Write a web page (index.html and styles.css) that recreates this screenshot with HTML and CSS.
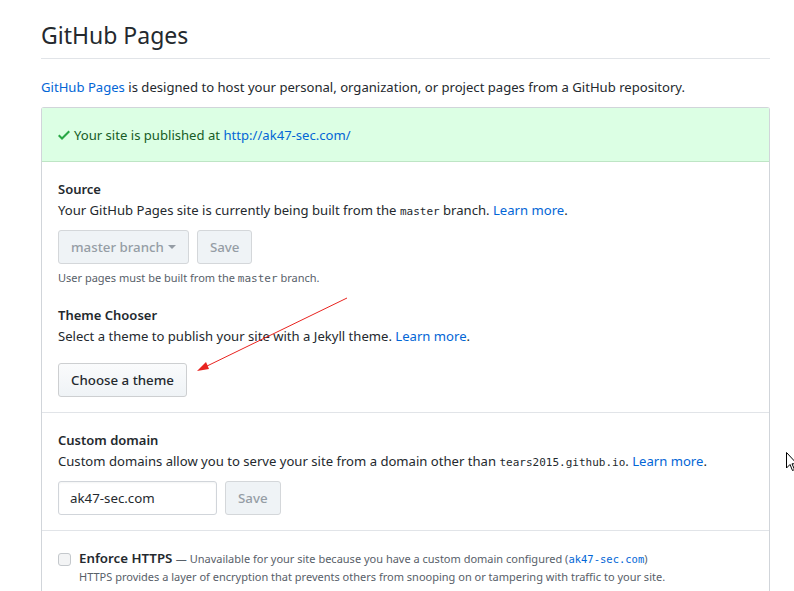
FILE: index.html
```html
<!DOCTYPE html>
<html>
<head>
<meta charset="utf-8">
<link rel="stylesheet" href="styles.css">
</head>
<body>
<div class="page">
  <h2 class="title">GitHub Pages</h2>
  <p class="intro"><a href="#">GitHub Pages</a> is designed to host your personal, organization, or project pages from a GitHub repository.</p>
  <div class="box">
    <div class="flash">
      <svg class="check" width="12" height="16" viewBox="0 0 12 16"><path d="M12 5l-8 8-4-4 1.5-1.5L4 10l6.5-6.5L12 5z" fill="#28a745"/></svg>
      <span>Your site is published at <a href="#">http://ak47-sec.com/</a></span>
    </div>
    <div class="section">
      <h4 class="label">Source</h4>
      <p class="desc">Your GitHub Pages site is currently being built from the <code>master</code> branch. <a href="#">Learn more</a>.</p>
      <div class="row">
        <button class="btn disabled">master branch <span class="caret"></span></button>
        <button class="btn disabled">Save</button>
      </div>
      <p class="note">User pages must be built from the <code>master</code> branch.</p>
      <h4 class="label second">Theme Chooser</h4>
      <p class="desc">Select a theme to publish your site with a Jekyll theme. <a href="#">Learn more</a>.</p>
      <div class="row spaced">
        <button class="btn">Choose a theme</button>
      </div>
    </div>
    <div class="section">
      <h4 class="label">Custom domain</h4>
      <p class="desc">Custom domains allow you to serve your site from a domain other than <code>tears2015.github.io</code>. <a href="#">Learn more</a>.</p>
      <div class="row">
        <input class="field" type="text" value="ak47-sec.com">
        <button class="btn disabled">Save</button>
      </div>
    </div>
    <div class="section https">
      <div class="check-row">
        <span class="checkbox"></span>
        <div>
          <div><strong class="strong">Enforce HTTPS</strong> <span class="muted">— Unavailable for your site because you have a custom domain configured (<code class="blue">ak47-sec.com</code>)</span></div>
          <div class="muted small">HTTPS provides a layer of encryption that prevents others from snooping on or tampering with traffic to your site.</div>
        </div>
      </div>
    </div>
  </div>
</div>
<svg class="annot" width="794" height="591" viewBox="0 0 794 591">
  <line x1="347" y1="298" x2="205" y2="367" stroke="#e8231f" stroke-width="1"/>
  <path d="M197 371 L206 362 L209 369 Z" fill="#e8231f"/>
</svg>
<svg class="cursor" width="12" height="20" viewBox="0 0 12 20">
  <path d="M0.5 0.5 L0.5 16 L4 12.5 L6.5 18.5 L8.5 17.5 L6 11.8 L11 11.8 Z" fill="#fff" stroke="#000" stroke-width="1"/>
</svg>
</body>
</html>
```
FILE: styles.css
```css
* { box-sizing: border-box; }
html, body { margin: 0; padding: 0; background: #fff; }
body {
  font-family: "Noto Sans", "Open Sans", sans-serif;
  font-size: 13.1px;
  color: #24292e;
  width: 794px;
  height: 591px;
  overflow: hidden;
  position: relative;
}
a { color: #0366d6; text-decoration: none; }
code {
  font-family: "DejaVu Sans Mono", monospace;
  font-size: 11px;
}
.page {
  padding: 20px 24px 0 41px;
}
.title {
  margin: 0;
  font-size: 23px;
  font-weight: 400;
  line-height: 30px;
  padding-bottom: 8px;
  border-bottom: 1px solid #e1e4e8;
}
.intro {
  margin: 17px 0 9px;
  line-height: 22px;
}
.box {
  border: 1px solid #d1d5da;
  border-radius: 3px 3px 0 0;
  border-bottom: none;
}
.flash {
  display: flex;
  align-items: center;
  gap: 4px;
  height: 54px;
  padding: 0 16px;
  background: #dcffe4;
  border-bottom: 1px solid #bee5c5;
  color: #165c26;
}
.check { display: block; }
.section {
  padding: 16px 16px 15px;
  border-bottom: 1px solid #e1e4e8;
}
.label {
  margin: 0;
  font-size: 13px;
  font-weight: 600;
  line-height: 22px;
}
.label.second { margin-top: 17px; }
.desc {
  margin: 0;
  line-height: 20px;
}
.row {
  display: flex;
  gap: 8px;
  margin-top: 8px;
}
.row.spaced { margin-top: 17px; }
.btn {
  height: 34px;
  padding: 0 12px;
  font-family: inherit;
  font-size: 13.3px;
  font-weight: 500;
  color: #24292e;
  background: linear-gradient(#fafbfc, #eff3f6);
  border: 1px solid #cdcfd1;
  border-radius: 3px;
  display: inline-flex;
  align-items: center;
  gap: 4px;
}
.btn.disabled {
  color: #959da5;
  background: #eff3f6;
  border-color: #d4d7da;
}
.caret {
  width: 0; height: 0;
  border-left: 4px solid transparent;
  border-right: 4px solid transparent;
  border-top: 4px solid #959da5;
}
.note {
  margin: 6px 0 0;
  font-size: 11px;
  line-height: 16px;
  color: #586069;
}
.field {
  width: 159px;
  height: 34px;
  padding: 0 11px;
  font-family: inherit;
  font-size: 13.3px;
  color: #24292e;
  border: 1px solid #d1d5da;
  border-radius: 3px;
  box-shadow: inset 0 1px 2px rgba(27,31,35,0.05);
}
.https { border-bottom: none; padding-top: 18px; }
.check-row {
  display: flex;
  gap: 8px;
  align-items: flex-start;
}
.checkbox {
  margin-top: 4px;
  width: 13px; height: 13px;
  border: 1px solid #c4c8cc;
  border-radius: 3px;
  background: #f3f4f5;
  flex: none;
}
.strong { font-weight: 600; font-size: 13.3px; }
.muted { color: #586069; font-size: 11px; }
.small { line-height: 20px; }
.blue { color: #0366d6; font-size: 10.5px; }
.annot {
  position: absolute;
  left: 0; top: 0;
  pointer-events: none;
}
.cursor {
  position: absolute;
  left: 786px; top: 452px;
}
```
